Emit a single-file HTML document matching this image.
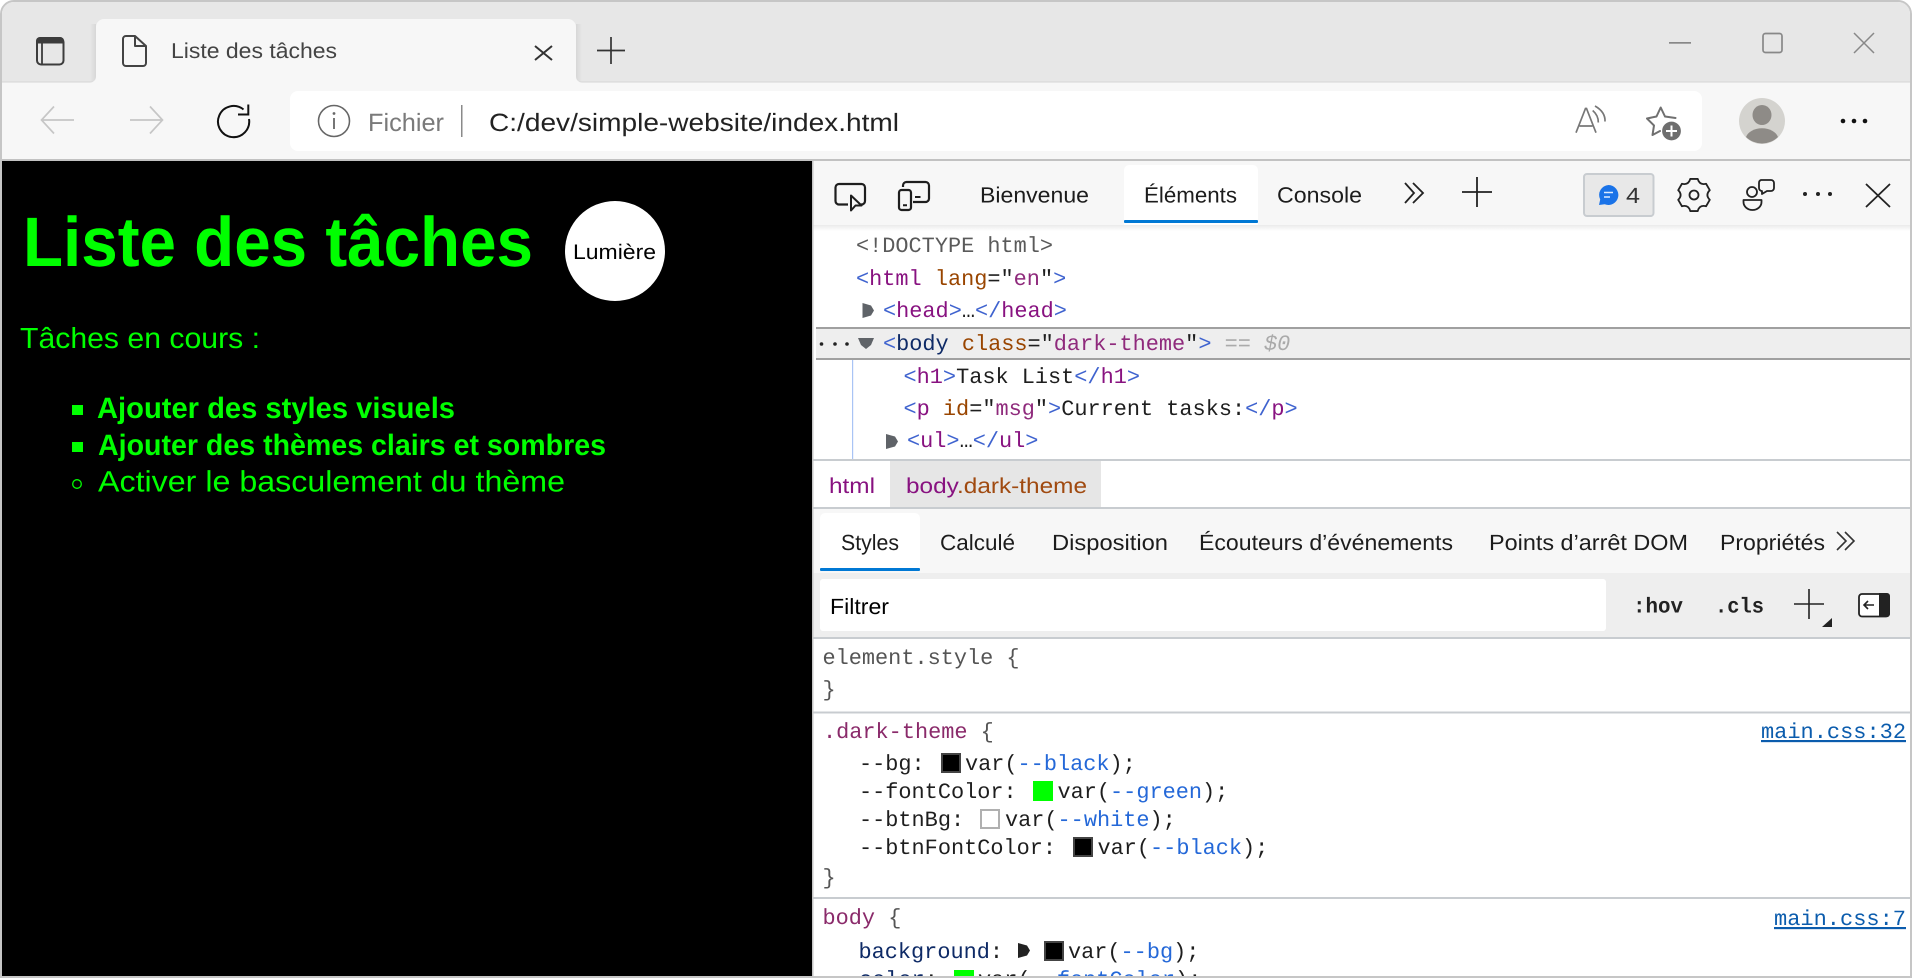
<!DOCTYPE html>
<html lang="fr">
<head>
<meta charset="utf-8">
<title>Liste des tâches</title>
<style>
html,body{margin:0;padding:0;background:#fff;width:1912px;height:978px;overflow:hidden}
svg{display:block;position:absolute;left:0;top:0}
text{font-family:"Liberation Sans",sans-serif;white-space:pre;text-rendering:geometricPrecision}
.m{font-family:"Liberation Mono",monospace;font-size:21.9px;fill:#1e1e1e;transform:translateY(-1px)}
.p{fill:#3f63cf}.n{fill:#881280}.a{fill:#994500}.v{fill:#8f2a7c}
.d{fill:#555}.s{fill:#8a2a6a}.b{fill:#2468d8}.g{fill:#0e2a66}
.ui{font-size:22px;fill:#1c1c1c}
</style>
</head>
<body>
<svg width="1912" height="978" viewBox="0 0 1912 978" xmlns="http://www.w3.org/2000/svg">
<defs>
<clipPath id="win"><path d="M14 2H1898a12 12 0 0 1 12 12V976H2V14A12 12 0 0 1 14 2Z"/></clipPath>
<linearGradient id="sh" x1="0" y1="0" x2="0" y2="1"><stop offset="0" stop-color="#000" stop-opacity=".08"/><stop offset="1" stop-color="#000" stop-opacity="0"/></linearGradient>
<linearGradient id="tl" x1="0" y1="0" x2="1" y2="0"><stop offset="0" stop-color="#000" stop-opacity="0"/><stop offset="1" stop-color="#000" stop-opacity=".07"/></linearGradient>
<linearGradient id="tr" x1="1" y1="0" x2="0" y2="0"><stop offset="0" stop-color="#000" stop-opacity="0"/><stop offset="1" stop-color="#000" stop-opacity=".07"/></linearGradient>
</defs>
<path d="M14 1H1898a13 13 0 0 1 13 13V977H1V14A13 13 0 0 1 14 1Z" fill="#fff" stroke="#c6c6c6" stroke-width="2"/>
<g clip-path="url(#win)">
<!-- browser chrome -->
<rect x="0" y="0" width="1912" height="82" fill="#e7e7e7"/>
<rect x="90" y="24" width="6" height="58" fill="url(#tl)"/>
<rect x="576" y="24" width="6" height="58" fill="url(#tr)"/>
<rect x="0" y="82" width="1912" height="78" fill="#f7f7f7"/>
<rect x="0" y="81.5" width="1912" height="1" fill="#d6d6d6"/>
<path d="M90 82.5a6 6 0 0 0 6-6V27a8 8 0 0 1 8-8H568a8 8 0 0 1 8 8V76.500a6 6 0 0 0 6 6Z" fill="#f7f7f7"/>
<rect x="0" y="159" width="1912" height="2.500" fill="#c2c2c2"/>
<rect x="290" y="91" width="1412" height="60" rx="8" fill="#fff"/>
<!-- page -->
<rect x="0" y="161" width="812.500" height="817" fill="#000"/>
<text x="23" y="266" font-size="70" font-weight="700" fill="#00ff00" textLength="510" lengthAdjust="spacingAndGlyphs">Liste des tâches</text>
<circle cx="615" cy="251" r="50" fill="#fff"/>
<text x="573" y="259" font-size="21" fill="#000" textLength="83" lengthAdjust="spacingAndGlyphs">Lumière</text>
<text x="20" y="348" font-size="29" fill="#00ff00" textLength="240" lengthAdjust="spacingAndGlyphs">Tâches en cours :</text>
<rect x="72" y="405" width="11" height="10" fill="#00ff00"/>
<text x="97" y="418" font-size="29.500" font-weight="700" fill="#00ff00" textLength="358" lengthAdjust="spacingAndGlyphs">Ajouter des styles visuels</text>
<rect x="72" y="442" width="11" height="10" fill="#00ff00"/>
<text x="98" y="455" font-size="29.500" font-weight="700" fill="#00ff00" textLength="508" lengthAdjust="spacingAndGlyphs">Ajouter des thèmes clairs et sombres</text>
<circle cx="77" cy="484" r="4.300" fill="none" stroke="#00ff00" stroke-width="1.300"/>
<text x="98" y="491.500" font-size="29.500" fill="#00ff00" textLength="467" lengthAdjust="spacingAndGlyphs">Activer le basculement du thème</text>
<!-- devtools panels -->
<rect x="813" y="161" width="1099" height="817" fill="#fff"/>
<rect x="813" y="161" width="1099" height="64" fill="#f7f7f7"/>
<rect x="813" y="225" width="1099" height="6" fill="url(#sh)"/>
<path d="M1124 225V170a5 5 0 0 1 5-5H1253a5 5 0 0 1 5 5V225Z" fill="#fff"/>
<rect x="1124" y="220" width="134" height="3" rx="1" fill="#0078d4"/>
<text class="ui" x="980" y="202.500" textLength="109" lengthAdjust="spacingAndGlyphs">Bienvenue</text>
<text class="ui" x="1144" y="202.500" textLength="93" lengthAdjust="spacingAndGlyphs">Éléments</text>
<text class="ui" x="1277" y="202.500" textLength="85" lengthAdjust="spacingAndGlyphs">Console</text>
<!-- DOM -->
<text class="m" x="856" y="253" style="fill:#5a5a5a">&lt;!DOCTYPE html&gt;</text>
<text class="m" x="856" y="286"><tspan class="p">&lt;</tspan><tspan class="n">html</tspan> <tspan class="a">lang</tspan>="<tspan class="v">en</tspan>"<tspan class="p">&gt;</tspan></text>
<path d="M862.500 303L871 305.500L874 310.500L871 315.500L862.500 318Z" fill="#5f6368"/>
<text class="m" x="883" y="318"><tspan class="p">&lt;</tspan><tspan class="n">head</tspan><tspan class="p">&gt;</tspan>…<tspan class="p">&lt;/</tspan><tspan class="n">head</tspan><tspan class="p">&gt;</tspan></text>
<rect x="816" y="327" width="1096" height="33" fill="#eeeeee"/>
<rect x="816" y="327" width="1096" height="2" fill="#a0a0a0"/>
<rect x="816" y="358" width="1096" height="2" fill="#a0a0a0"/>
<circle cx="821.500" cy="344" r="1.800" fill="#222"/><circle cx="835" cy="344" r="1.800" fill="#222"/><circle cx="847" cy="344" r="1.800" fill="#222"/>
<path d="M858 338H874L871 345L866 349L861 345Z" fill="#5f6368"/>
<text class="m" x="883" y="351"><tspan class="p">&lt;</tspan><tspan class="g">body</tspan> <tspan class="a">class</tspan>="<tspan class="v">dark-theme</tspan>"<tspan class="p">&gt;</tspan> <tspan fill="#aaaaaa" font-style="italic">== $0</tspan></text>
<rect x="852" y="360" width="1.200" height="99" fill="#a9c4f5"/>
<text class="m" x="903.500" y="384"><tspan class="p">&lt;</tspan><tspan class="n">h1</tspan><tspan class="p">&gt;</tspan>Task List<tspan class="p">&lt;/</tspan><tspan class="n">h1</tspan><tspan class="p">&gt;</tspan></text>
<text class="m" x="903.500" y="416"><tspan class="p">&lt;</tspan><tspan class="n">p</tspan> <tspan class="a">id</tspan>="<tspan class="v">msg</tspan>"<tspan class="p">&gt;</tspan>Current tasks:<tspan class="p">&lt;/</tspan><tspan class="n">p</tspan><tspan class="p">&gt;</tspan></text>
<path d="M886 434L895 436.500L898 441.500L895 446.500L886 449Z" fill="#5f6368"/>
<text class="m" x="907" y="448"><tspan class="p">&lt;</tspan><tspan class="n">ul</tspan><tspan class="p">&gt;</tspan>…<tspan class="p">&lt;/</tspan><tspan class="n">ul</tspan><tspan class="p">&gt;</tspan></text>
<!-- breadcrumbs -->
<rect x="813" y="459" width="1099" height="2" fill="#c8ccd0"/>
<rect x="890" y="461" width="211" height="46" fill="#e6e6e6"/>
<text x="829" y="493" font-size="21.500" fill="#881280" textLength="46" lengthAdjust="spacingAndGlyphs">html</text>
<text x="906" y="493" font-size="21.500" fill="#881280" textLength="181" lengthAdjust="spacingAndGlyphs">body<tspan fill="#a04a10">.dark-theme</tspan></text>
<rect x="813" y="507" width="1099" height="2" fill="#c8ccd0"/>
<!-- styles tabs -->
<rect x="813" y="509" width="1099" height="64" fill="#f7f7f7"/>
<path d="M820 571V518a5 5 0 0 1 5-5H915a5 5 0 0 1 5 5V571Z" fill="#fff"/>
<rect x="820" y="568" width="100" height="3" rx="1" fill="#0078d4"/>
<text class="ui" x="841" y="550" textLength="58" lengthAdjust="spacingAndGlyphs">Styles</text>
<text class="ui" x="940" y="550" textLength="75" lengthAdjust="spacingAndGlyphs">Calculé</text>
<text class="ui" x="1052" y="550" textLength="116" lengthAdjust="spacingAndGlyphs">Disposition</text>
<text class="ui" x="1199" y="550" textLength="254" lengthAdjust="spacingAndGlyphs">Écouteurs d’événements</text>
<text class="ui" x="1489" y="550" textLength="199" lengthAdjust="spacingAndGlyphs">Points d’arrêt DOM</text>
<text class="ui" x="1720" y="550" textLength="105" lengthAdjust="spacingAndGlyphs">Propriétés</text>
<path d="M1837 532L1846 541L1837 550M1845 532L1854 541L1845 550" fill="none" stroke="#333" stroke-width="1.600"/>
<!-- filter -->
<rect x="813" y="573" width="1099" height="64" fill="#eeeeee"/>
<rect x="820" y="579" width="786" height="52" rx="3" fill="#fff"/>
<text class="ui" x="830" y="614" textLength="59" lengthAdjust="spacingAndGlyphs" style="fill:#000">Filtrer</text>
<text x="1633" y="612.500" font-size="21.500" font-weight="700" fill="#222" textLength="50" lengthAdjust="spacingAndGlyphs" style="font-family:'Liberation Mono',monospace">:hov</text>
<text x="1715" y="612.500" font-size="21.500" font-weight="700" fill="#222" textLength="49" lengthAdjust="spacingAndGlyphs" style="font-family:'Liberation Mono',monospace">.cls</text>
<path d="M1794 604H1824M1809 589V619" stroke="#222" stroke-width="1.600" fill="none"/>
<path d="M1832 618V627H1822Z" fill="#222"/>
<rect x="1859" y="594" width="30" height="22.500" rx="3" fill="#fff" stroke="#222" stroke-width="1.800"/>
<path d="M1879 593H1887a3 3 0 0 1 3 3V614a3 3 0 0 1-3 3H1879Z" fill="#222"/>
<path d="M1874 605H1864M1868 601L1864 605L1868 609" stroke="#222" stroke-width="1.600" fill="none"/>
<rect x="813" y="637" width="1099" height="2" fill="#c8ccd0"/>
<!-- styles -->
<text class="m" x="822.500" y="665" style="fill:#555">element.style {</text>
<text class="m" x="822.500" y="697" style="fill:#555">}</text>
<rect x="813" y="711.500" width="1099" height="2" fill="#c8ccd0"/>
<text class="m" x="823" y="739"><tspan class="s">.dark-theme</tspan> <tspan class="d">{</tspan></text>
<text x="1761" y="738" font-size="21.600" fill="#0b5cad" text-decoration="underline" style="font-family:'Liberation Mono',monospace" textLength="145" lengthAdjust="spacingAndGlyphs">main.css:32</text>
<text class="m" x="859" y="771">--bg:</text>
<rect x="942" y="754" width="18" height="18" fill="#000" stroke="#444" stroke-width="2"/>
<text class="m" x="965" y="771">var(<tspan class="b">--black</tspan>);</text>
<text class="m" x="859" y="799">--fontColor:</text>
<rect x="1033" y="781" width="20" height="20" fill="#00ff00"/>
<text class="m" x="1057.500" y="799">var(<tspan class="b">--green</tspan>);</text>
<text class="m" x="859" y="827">--btnBg:</text>
<rect x="981" y="810" width="18" height="18" fill="#fff" stroke="#b0b0b0" stroke-width="2"/>
<text class="m" x="1005" y="827">var(<tspan class="b">--white</tspan>);</text>
<text class="m" x="859" y="855">--btnFontColor:</text>
<rect x="1074" y="838" width="18" height="18" fill="#000" stroke="#444" stroke-width="2"/>
<text class="m" x="1097.500" y="855">var(<tspan class="b">--black</tspan>);</text>
<text class="m" x="822.500" y="885" style="fill:#555">}</text>
<rect x="813" y="897" width="1099" height="2" fill="#c8ccd0"/>
<text class="m" x="822.500" y="925"><tspan class="s">body</tspan> <tspan class="d">{</tspan></text>
<text x="1774" y="925" font-size="21.600" fill="#0b5cad" text-decoration="underline" style="font-family:'Liberation Mono',monospace" textLength="132" lengthAdjust="spacingAndGlyphs">main.css:7</text>
<text class="m" x="858.500" y="959"><tspan class="g">background</tspan>:</text>
<path d="M1018 943L1027 945.500L1030 950.500L1027 955.500L1018 958Z" fill="#222"/>
<rect x="1045" y="942" width="18" height="18" fill="#000" stroke="#444" stroke-width="2"/>
<text class="m" x="1068" y="959">var(<tspan class="b">--bg</tspan>);</text>
<text class="m" x="859" y="987"><tspan class="g">color</tspan>:</text>
<rect x="954" y="970" width="20" height="20" fill="#00ff00"/>
<text class="m" x="978" y="987">var(<tspan class="b">--fontColor</tspan>);</text>
<!-- chrome icons -->
<rect x="37" y="38" width="26.500" height="26.500" rx="4" fill="none" stroke="#3c3c3c" stroke-width="2"/>
<path d="M36 43.500V41a4 4 0 0 1 4-4H60a4 4 0 0 1 4 4V43.500Z" fill="#3c3c3c"/>
<path d="M42 43V64" stroke="#3c3c3c" stroke-width="1.800"/>
<path d="M126 36H135L146 46V63a3 3 0 0 1-3 3H126a3 3 0 0 1-3-3V39a3 3 0 0 1 3-3ZM135 36V46H146" fill="none" stroke="#444" stroke-width="2" stroke-linejoin="round"/>
<text x="171" y="58" font-size="21.500" fill="#444" textLength="166" lengthAdjust="spacingAndGlyphs">Liste des tâches</text>
<path d="M535 46L552 60M552 46L535 60" stroke="#333" stroke-width="2" fill="none"/>
<path d="M597 50.500H625M611 37V64" stroke="#333" stroke-width="1.700" fill="none"/>
<path d="M74 120H42M54 106.500L41.500 120L54 133.500" stroke="#c6c6c6" stroke-width="1.700" fill="none"/>
<path d="M130 120H162M150 106.500L162.500 120L150 133.500" stroke="#c6c6c6" stroke-width="1.700" fill="none"/>
<path d="M243.500 109.500A15.600 15.600 0 1 0 249 119" stroke="#111" stroke-width="2" fill="none"/>
<path d="M248.300 104.500V114.500H238" stroke="#111" stroke-width="2" fill="none"/>
<circle cx="334" cy="121" r="15.500" fill="none" stroke="#666" stroke-width="1.600"/>
<circle cx="334" cy="113.500" r="1.400" fill="#666"/>
<path d="M334 118V129" stroke="#666" stroke-width="1.800"/>
<text x="368" y="131" font-size="25" fill="#7a7a7a" textLength="76" lengthAdjust="spacingAndGlyphs">Fichier</text>
<rect x="461" y="105" width="1.500" height="32" fill="#8a8a8a"/>
<text x="489" y="131" font-size="25" fill="#222" textLength="410" lengthAdjust="spacingAndGlyphs">C:/dev/simple-website/index.html</text>
<path d="M1576 132.700L1585.500 108.500H1586.500L1596 132.700M1579.500 126H1592.500" stroke="#777" stroke-width="1.700" fill="none"/>
<path d="M1592.700 110.500Q1598.500 115.500 1598.300 122.500M1595 106Q1605.500 112 1605 121.500" stroke="#777" stroke-width="1.700" fill="none"/>
<path d="M1665 116.500L1660.700 107.500L1656.500 116.500L1647 118.500L1654 125.500L1652.500 135L1660 131M1665 116.500L1675.500 118" stroke="#707070" stroke-width="2" fill="none" stroke-linejoin="round" stroke-linecap="round"/>
<circle cx="1671.500" cy="131" r="9.400" fill="#6e6e6e"/>
<path d="M1666 131H1677M1671.500 125.500V136.500" stroke="#fff" stroke-width="2"/>
<rect x="1669" y="42" width="22" height="1.700" fill="#888"/>
<rect x="1763" y="33.500" width="19" height="19" rx="2.500" fill="none" stroke="#888" stroke-width="1.700"/>
<path d="M1854 33L1874 53M1874 33L1854 53" stroke="#888" stroke-width="1.500" fill="none"/>
<circle cx="1762" cy="121" r="23" fill="#d4d3cf"/>
<ellipse cx="1762" cy="115" rx="9.500" ry="10" fill="#8e8b87"/>
<path d="M1746 137A16.500 11.500 0 0 1 1778 137A23 23 0 0 1 1746 137Z" fill="#8e8b87"/>
<circle cx="1843" cy="121" r="2.300" fill="#111"/><circle cx="1854" cy="121" r="2.300" fill="#111"/><circle cx="1865" cy="121" r="2.300" fill="#111"/>
<!-- devtools icons -->
<path d="M848 204.500H839a3.500 3.500 0 0 1-3.500-3.500V187.500a3.500 3.500 0 0 1 3.500-3.500H861.500a3.500 3.500 0 0 1 3.500 3.500V201a3.500 3.500 0 0 1-3.500 3.500H861" fill="none" stroke="#1e1e1e" stroke-width="2.200"/>
<path d="M851 195.500V210.500L855.500 205.500H861.500Z" fill="#f7f7f7" stroke="#1e1e1e" stroke-width="2" stroke-linejoin="round"/>
<path d="M903 187V185.500a3.500 3.500 0 0 1 3.500-3.500H925.500a3.500 3.500 0 0 1 3.500 3.500V198.500a3.500 3.500 0 0 1-3.500 3.500H913" fill="none" stroke="#1e1e1e" stroke-width="2.200"/>
<rect x="899" y="190" width="12" height="20" rx="2.500" fill="none" stroke="#1e1e1e" stroke-width="2.200"/>
<path d="M903 205.300H907M915 197H920.500" stroke="#1e1e1e" stroke-width="2"/>
<path d="M1405 183L1414 193L1405 203M1413 183L1423 193L1413 203" fill="none" stroke="#222" stroke-width="1.800"/>
<path d="M1462 192H1492M1477 177V207" stroke="#222" stroke-width="1.800" fill="none"/>
<rect x="1584" y="174" width="69.500" height="42" rx="3" fill="#e8e8e8" stroke="#c8ccd0" stroke-width="2"/>
<path d="M1608.500 185a10 10 0 1 1-3.800 19.300L1599 205L1600.200 199.500A10 10 0 0 1 1608.500 185Z" fill="#1a73e8"/>
<path d="M1604 192.500H1613M1604 197H1610" stroke="#dcebff" stroke-width="1.500"/>
<text x="1626" y="203" font-size="22" fill="#333" textLength="14" lengthAdjust="spacingAndGlyphs">4</text>
<g transform="translate(1694 195)" fill="none" stroke="#222" stroke-width="1.800" stroke-linejoin="round">
<path d="M-3.710 -16.080L3.710 -16.080Q5.500 -9.530 12.070 -11.250L15.780 -4.820Q11 0 15.780 4.820L12.070 11.250Q5.500 9.530 3.710 16.080L-3.710 16.080Q-5.500 9.530 -12.070 11.250L-15.780 4.820Q-11 0 -15.780 -4.820L-12.070 -11.250Q-5.500 -9.530 -3.710 -16.080Z"/>
<circle r="4.500"/>
</g>
<circle cx="1752" cy="192" r="5" fill="none" stroke="#222" stroke-width="1.800"/>
<path d="M1743.500 200H1761.500V202A9 8 0 0 1 1743.500 202Z" fill="none" stroke="#222" stroke-width="1.800" stroke-linejoin="round"/>
<path d="M1761 180H1771a3 3 0 0 1 3 3V188a3 3 0 0 1-3 3H1767L1762 194V191a3 3 0 0 1-3-3V183a3 3 0 0 1 2-3Z" fill="none" stroke="#222" stroke-width="1.800" stroke-linejoin="round"/>
<circle cx="1805" cy="194" r="2" fill="#222"/><circle cx="1818" cy="194" r="2" fill="#222"/><circle cx="1830" cy="194" r="2" fill="#222"/>
<path d="M1866 184L1890 207M1890 184L1866 207" stroke="#222" stroke-width="1.800" fill="none"/>
</g>
<rect x="0" y="976" width="1912" height="2" fill="#c6c6c6"/>
<rect x="812" y="161" width="1.500" height="815" fill="#c6c6c6"/>
<rect x="1910" y="14" width="2" height="964" fill="#c6c6c6"/>
<rect x="0" y="14" width="2" height="964" fill="#c6c6c6"/>
</svg>
</body>
</html>
